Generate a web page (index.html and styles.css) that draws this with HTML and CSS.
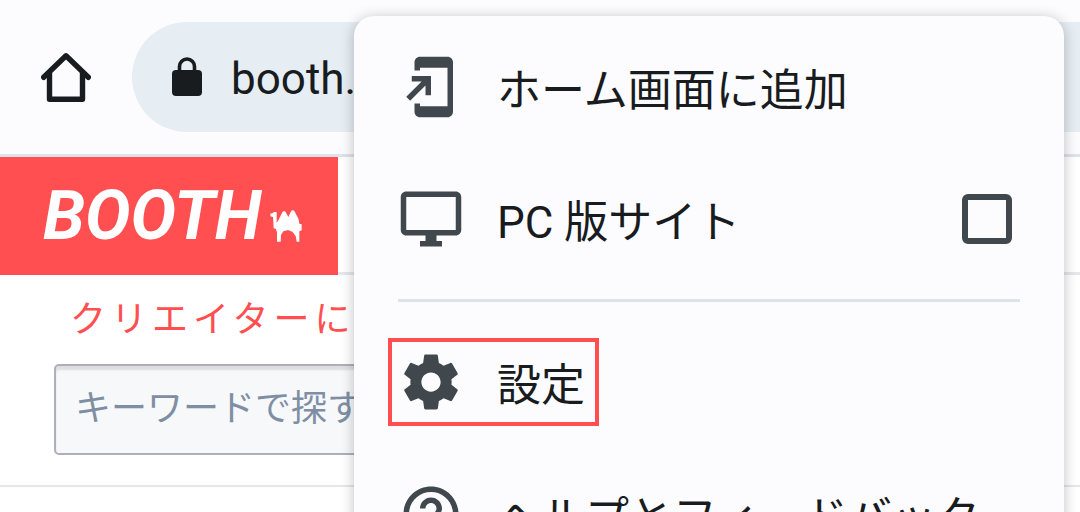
FILE: index.html
```
<!DOCTYPE html>
<html lang="ja">
<head>
    <meta charset="UTF-8">
    <meta name="viewport" content="width=device-width, initial-scale=1.0">
    <title>BOOTH</title>
    <link rel="stylesheet" href="styles.css">
</head>
<body>
    <header class="toolbar">
        <button type="button" class="home-btn" aria-label="ホーム">
            <svg width="50" height="50" viewBox="0 0 50 50" fill="none" stroke="currentColor" stroke-width="5.400" stroke-linecap="round" stroke-linejoin="round">
                <path d="M8.500 21V47.200H41.500V21"/>
                <path d="M2.700 25.300L25 3.800L47.300 25.300"/>
            </svg>
        </button>
        <div class="address-bar">
            <svg width="30" height="40" viewBox="0 0 30 40">
                <path d="M7.500 15V9.500a7.500 7.500 0 0 1 15 0V15" fill="none" stroke="currentColor" stroke-width="3.600"/>
                <rect x="0" y="13" width="30" height="26" rx="4" fill="currentColor"/>
            </svg>
            <span>booth.</span>
        </div>
    </header>

    <main>
        <div class="site-header">
            <a href="#" class="logo">
                <span class="logo-text">BOOTH</span>
                <svg width="32" height="32" viewBox="811 194 96 96" fill="currentColor">
                    <path d="M812 205L820 203L822 200H831V232L836 225L849 199L854 197L858 200L866 215L875 196L880 194L884 197L897 222L899 235L906 237V255L899 258V289H891L888 272L878 259L865 254L851 258L844 269L843 289H832V262L829 251L822 249L820 215L812 213Z"/>
                </svg>
            </a>
        </div>
        <p class="tagline">クリエイターに</p>
        <form class="search">
            <input type="search" placeholder="キーワードで探す" aria-label="キーワードで探す">
        </form>
    </main>

    <nav class="menu">
        <button type="button" class="menu-item">
            <svg class="icon" viewBox="0 0 24 24"><path d="M18 1.010L8 1c-1.100 0-2 .9-2 2v3h2V5h10v14H8v-1H6v3c0 1.100.9 2 2 2h10c1.100 0 2-.9 2-2V3c0-1.100-.9-1.990-2-1.990zM10 15h2V8H5v2h3.590L3 15.590 4.410 17 10 11.410V15z"/></svg>
            <span class="label">ホーム画面に追加</span>
        </button>
        <div class="menu-item">
            <svg class="icon" viewBox="0 0 24 24"><path d="M21 2H3c-1.100 0-2 .9-2 2v12c0 1.100.9 2 2 2h7v2H8v2h8v-2h-2v-2h7c1.100 0 2-.9 2-2V4c0-1.100-.9-2-2-2zm0 14H3V4h18v12z"/></svg>
            <label class="label" for="desktop-site">PC 版サイト</label>
            <input type="checkbox" id="desktop-site">
        </div>
        <hr>
        <button type="button" class="menu-item">
            <span class="highlight">
                <svg class="icon" viewBox="0 0 24 24"><path d="M19.430 12.980c.040-.320.070-.640.070-.980s-.030-.660-.070-.980l2.110-1.650c.190-.150.240-.420.120-.640l-2-3.460c-.120-.220-.390-.3-.610-.220l-2.490 1c-.520-.4-1.080-.730-1.690-.980l-.380-2.650C14.460 2.180 14.250 2 14 2h-4c-.250 0-.460.180-.490.420l-.380 2.650c-.610.250-1.170.590-1.690.980l-2.490-1c-.230-.090-.490 0-.610.220l-2 3.460c-.130.220-.070.490.120.640l2.110 1.650c-.040.320-.070.650-.070.980s.030.660.070.980l-2.110 1.650c-.190.150-.240.420-.120.640l2 3.460c.120.220.390.3.610.220l2.490-1c.520.4 1.080.730 1.690.980l.380 2.650c.030.240.240.420.490.420h4c.250 0 .460-.180.490-.420l.380-2.650c.610-.250 1.170-.590 1.690-.980l2.490 1c.230.090.490 0 .610-.220l2-3.460c.120-.220.070-.490-.120-.640l-2.110-1.650zM12 15.500c-1.930 0-3.500-1.570-3.500-3.500s1.570-3.500 3.500-3.500 3.500 1.570 3.500 3.500-1.570 3.500-3.500 3.500z"/></svg>
                <span class="label">設定</span>
            </span>
        </button>
        <button type="button" class="menu-item">
            <svg class="icon" viewBox="0 0 24 24"><path d="M11 18h2v-2h-2v2zm1-16C6.480 2 2 6.480 2 12s4.480 10 10 10 10-4.480 10-10S17.520 2 12 2zm0 18c-4.410 0-8-3.590-8-8s3.590-8 8-8 8 3.590 8 8-3.590 8-8 8zm0-14c-2.210 0-4 1.790-4 4h2c0-1.100.9-2 2-2s2 .9 2 2c0 2-3 1.750-3 5h2c0-2.250 3-2.500 3-5 0-2.210-1.790-4-4-4z"/></svg>
            <span class="label">ヘルプとフィードバック</span>
        </button>
    </nav>
</body>
</html>
```
FILE: styles.css
```
*{
    margin:0;
    padding:0;
    box-sizing:border-box;
}

body{
    position:relative;
    height:100vh;
    overflow:hidden;
    background-color:#fff;
    color:#191c1e;
    font-family:Roboto, "Noto Sans CJK JP", sans-serif;
}

button{
    border:none;
    background:none;
    color:inherit;
    font:inherit;
    text-align:left;
    cursor:pointer;
}

svg{
    display:block;
    flex:none;
}

/* browser toolbar */
.toolbar{
    display:flex;
    align-items:center;
    gap:41px;
    height:157px;
    padding-left:41px;
    border-bottom:3px solid #dce3ea;
    background-color:#fcfcff;
}

.address-bar{
    display:flex;
    flex:1;
    align-items:center;
    gap:29px;
    height:110px;
    padding-left:40px;
    border-radius:55px 0 0 55px;
    background-color:#e6edf3;
    font-size:44px;
}

.address-bar span{
    padding-top:4px;
}

/* page */
.site-header{
    display:flex;
    height:118px;
    border-bottom:3px solid #e5e7ea;
}

.logo{
    display:flex;
    align-items:flex-end;
    justify-content:space-between;
    width:338px;
    height:118px;
    padding:0 36px 33px 43px;
    background-color:#ff4f50;
    color:#fff;
    text-decoration:none;
}

.logo-text{
    font-family:Roboto, sans-serif;
    font-size:68px;
    font-style:italic;
    font-weight:bold;
    line-height:52px;
}

.tagline{
    padding:19px 0 0 70px;
    color:#ff4f50;
    font-size:36px;
    letter-spacing:5px;
    line-height:52px;
    white-space:nowrap;
}

.search{
    padding:18px 54px 30px;
    border-bottom:2px solid #e5e6eb;
}

.search input{
    display:block;
    width:100%;
    height:91px;
    padding:0 19px 2px;
    border:2px solid #adafbd;
    border-radius:5px;
    background-color:#f6f8fa;
    box-shadow:inset 0 4px 2px #dcdedf;
    font:inherit;
    font-size:36px;
}

.search input::placeholder{
    color:#7f8fa3;
}

/* overflow menu */
.menu{
    position:absolute;
    top:16px;
    right:16px;
    width:710px;
    padding:5px 0;
    border-radius:20px;
    background-color:#fcfcff;
    box-shadow:0 2px 14px rgba(0,0,0,0.25);
    font-size:44px;
}

.menu-item{
    display:flex;
    align-items:center;
    gap:33px;
    width:100%;
    height:132px;
    padding:0 52px 0 44px;
    line-height:64px;
    white-space:nowrap;
}

.label{
    padding-top:7px;
}

.icon{
    width:66px;
    height:66px;
    fill:#41484d;
}

.menu-item input{
    appearance:none;
    width:50px;
    height:50px;
    margin-left:auto;
    border:6px solid #41484d;
    border-radius:6px;
}

.menu-item input:checked{
    background-color:#41484d;
}

.menu hr{
    height:3px;
    margin:14px 44px;
    border:none;
    background-color:#dce3e9;
}

.highlight{
    display:flex;
    align-items:center;
    gap:33px;
    height:88px;
    margin-left:-10px;
    padding:0 10px 0 6px;
    border:4px solid #ff4f50;
}
```
